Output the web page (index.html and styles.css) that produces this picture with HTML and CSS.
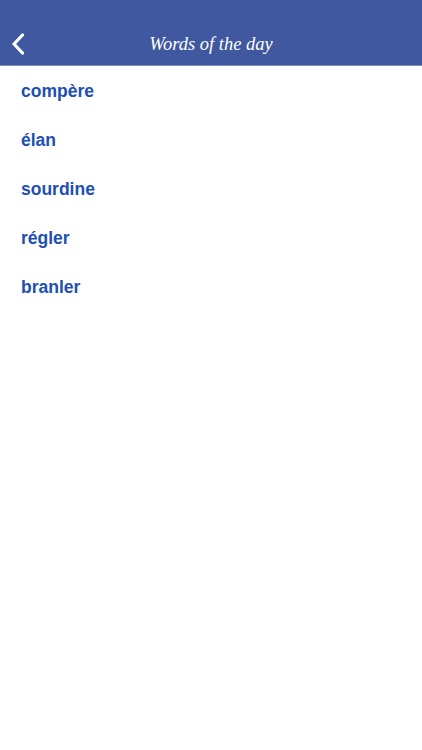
FILE: index.html
```html
<!DOCTYPE html>
<html lang="fr">
<head>
  <meta charset="UTF-8">
  <meta name="viewport" content="width=device-width, initial-scale=1.0">
  <title>Words of the day</title>
  <link rel="stylesheet" href="styles.css">
</head>
<body>
  <header class="nav-bar">
      <a class="back-button" href="#">
          <svg width="14" height="22" viewBox="0 0 14 22">
              <path d="M11.5 2 L3 11 L11.5 20" fill="none" stroke="white" stroke-width="3.2" stroke-linecap="round" stroke-linejoin="round"/>
          </svg>
      </a>
      <h1 class="nav-title">Words of the day</h1>
  </header>

  <ul class="word-list">
      <li class="word">compère</li>
      <li class="word">élan</li>
      <li class="word">sourdine</li>
      <li class="word">régler</li>
      <li class="word">branler</li>
  </ul>
</body>
</html>
```

FILE: styles.css
```css
body {
    margin: 0;
    background-color: white;
    font-family: 'Liberation Sans', Arial, sans-serif;
}

.nav-bar {
    position: relative;
    height: 66px;
    background-color: #3f58a0;
    border-bottom: 1px solid #8193bf;
    box-sizing: border-box;
    display: flex;
    align-items: flex-end;
    justify-content: center;
    padding-bottom: 10px;
}

.back-button {
    position: absolute;
    left: 11px;
    top: 33px;
    display: block;
    line-height: 0;
}

.nav-title {
    margin: 0;
    color: white;
    font-family: 'Liberation Serif', 'Times New Roman', serif;
    font-style: italic;
    font-weight: normal;
    font-size: 18.5px;
    line-height: 22px;
}

.word-list {
    list-style: none;
    margin: 0;
    padding: 13px 0 0 21px;
}

.word {
    height: 49px;
    line-height: 25px;
    color: #1e4fb6;
    font-weight: bold;
    font-size: 17.5px;
}
```
